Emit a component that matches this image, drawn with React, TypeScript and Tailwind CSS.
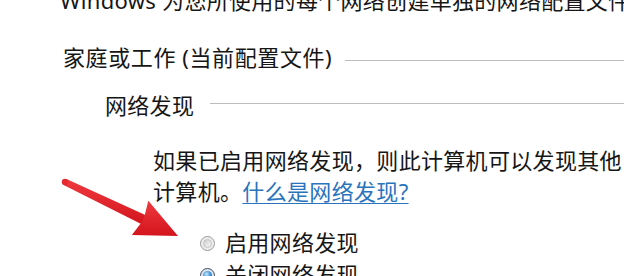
import React from "react";

function Radio({ checked }: { checked?: boolean }) {
  if (checked) {
    return (
      <div className="w-[15px] h-[15px] rounded-full border border-[#3e4f66] bg-[#dfe6ee] flex items-center justify-center shrink-0">
        <div className="w-[9px] h-[9px] rounded-full bg-[radial-gradient(circle_at_40%_35%,#c9ecff_0%,#3d8fd6_50%,#174d85_100%)]" />
      </div>
    );
  }
  return (
    <div className="w-[15px] h-[15px] rounded-full border border-[#9c9c9c] bg-[#ececec] flex items-center justify-center shrink-0">
      <div className="w-[9px] h-[9px] rounded-full border border-[#c4c4c4] bg-gradient-to-br from-[#cfcfcf] to-[#f7f7f7]" />
    </div>
  );
}

export default function App() {
  return (
    <div className="relative w-[624px] h-[276px] overflow-hidden bg-white text-[#161616] font-['Noto_Sans','Noto_Sans_CJK_SC',sans-serif] text-[22px] tracking-[0.3px]">
      <div className="flex flex-col">
        <div className="h-[32px] mt-[-16px] pl-[60px] flex items-center whitespace-nowrap">
          Windows 为您所使用的每个网络创建单独的网络配置文件。
        </div>

        <div className="h-[32px] mt-[25px] pl-[63px] flex items-center whitespace-nowrap">
          <span className="tracking-[0.6px]">家庭或工作 (当前配置文件)</span>
          <div className="flex-1 h-px bg-[#bcbcbc] ml-[13px] mt-[6px]" />
        </div>

        <div className="h-[32px] mt-[16px] pl-[105px] flex items-center whitespace-nowrap">
          <span>网络发现</span>
          <div className="flex-1 h-px bg-[#bcbcbc] ml-[16px] mt-[-4px]" />
        </div>

        <div className="mt-[24px] pl-[153px] leading-[31px] whitespace-nowrap tracking-[0.33px]">
          <div>如果已启用网络发现，则此计算机可以发现其他</div>
          <div>
            计算机。
            <span className="text-[#2a74bd] underline underline-offset-[3px] decoration-[1px]">什么是网络发现?</span>
          </div>
        </div>

        <div className="h-[32px] mt-[19px] pl-[200px] flex items-center whitespace-nowrap">
          <div className="mt-[3px]">
            <Radio />
          </div>
          <span className="ml-[10px] tracking-0">启用网络发现</span>
        </div>

        <div className="h-[32px] pl-[200px] flex items-center whitespace-nowrap">
          <div className="mt-[3px]">
            <Radio checked />
          </div>
          <span className="ml-[10px] tracking-0">关闭网络发现</span>
        </div>
      </div>

      <svg
        className="absolute left-0 top-0 pointer-events-none"
        width="624"
        height="276"
        viewBox="0 0 624 276"
      >
        <defs>
          <linearGradient id="ar" x1="0" y1="0" x2="0" y2="1">
            <stop offset="0" stopColor="#ef3a3f" />
            <stop offset="1" stopColor="#d3141c" />
          </linearGradient>
        </defs>
        <polygon
          points="63.6,184.9 66.4,179.1 148.6,216.4 144.2,225.4"
          fill="url(#ar)"
        />
        <circle cx="65" cy="182" r="3.2" fill="#e62a31" />
        <polygon
          points="178,236 148.3,200.8 143.7,219.6 131.9,235"
          fill="url(#ar)"
        />
      </svg>
    </div>
  );
}
